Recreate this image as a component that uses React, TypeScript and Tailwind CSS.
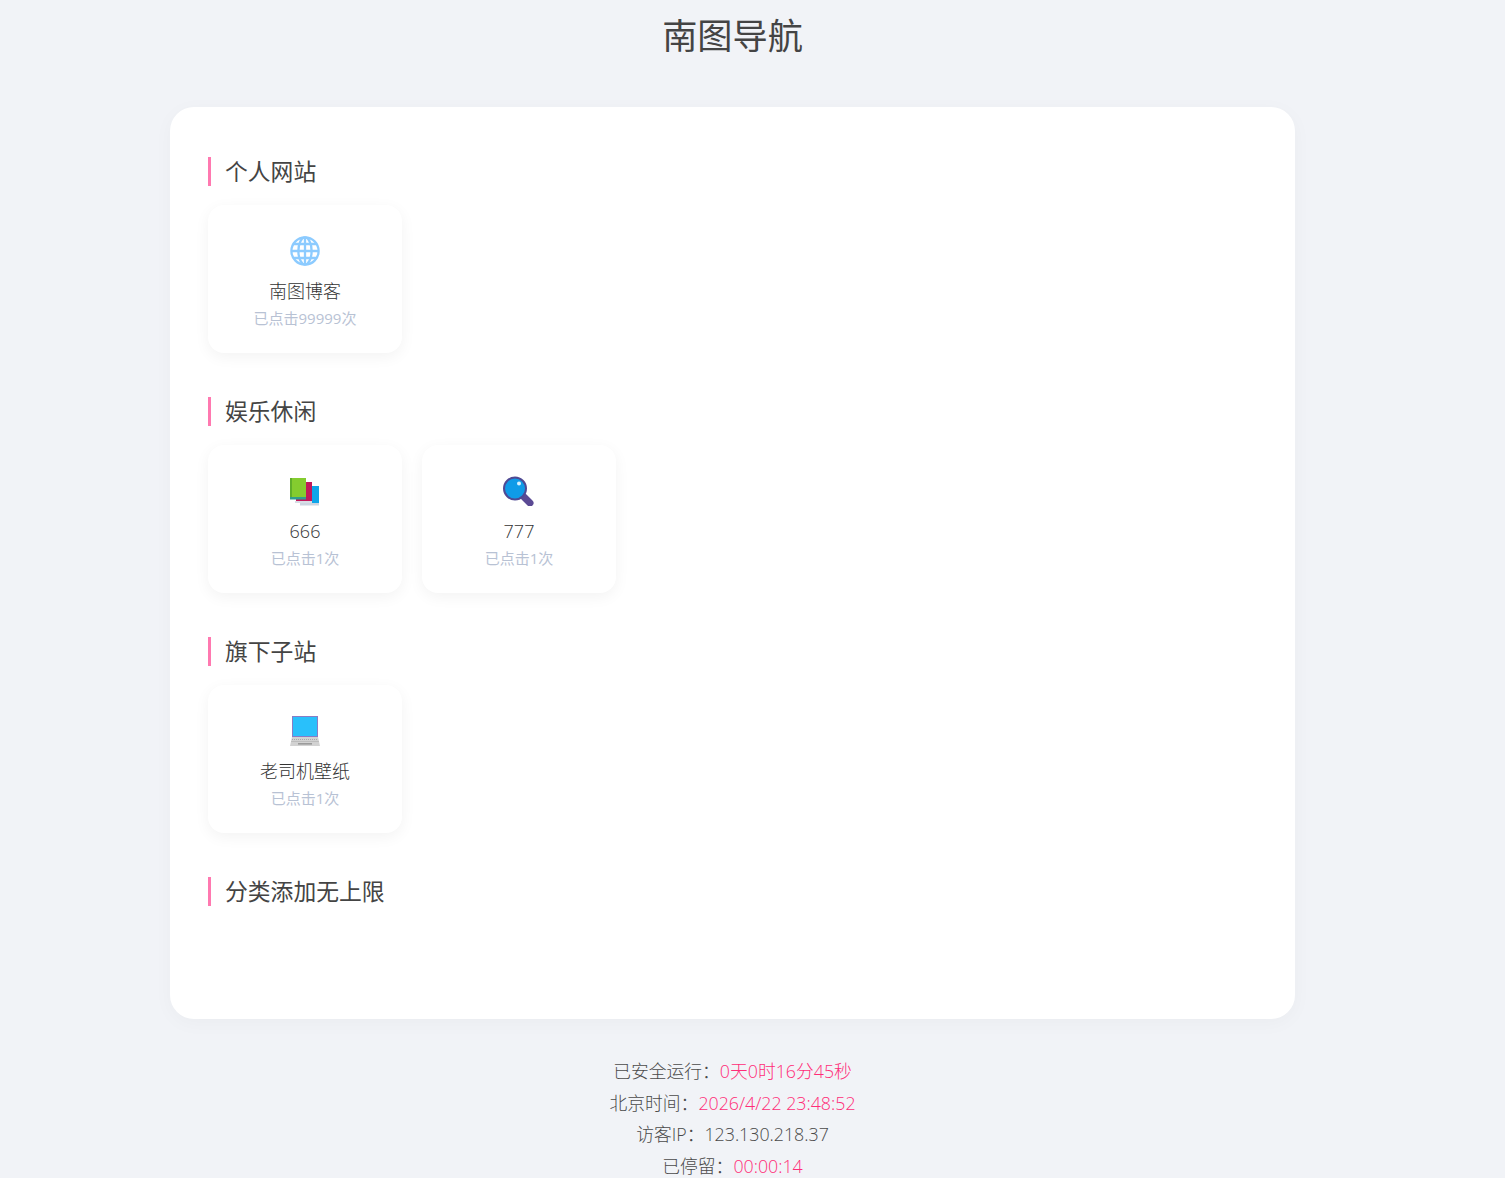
import React from "react";

const Globe = () => (
  <svg width="30" height="30" viewBox="0 0 30 30" fill="none" stroke="#8ccbff" strokeWidth="2.3">
    <circle cx="15" cy="15" r="13.6" />
    <ellipse cx="15" cy="15" rx="6.6" ry="13.6" />
    <path d="M15 1.4V28.6M1.4 15H28.6M3.6 8H26.4M3.6 22H26.4" />
  </svg>
);

const Books = () => (
  <svg width="32" height="30" viewBox="0 0 32 30">
    <rect x="14" y="10" width="16" height="19" fill="#0ea5e9" />
    <rect x="11" y="27" width="19" height="2.5" fill="#cbd5e1" />
    <rect x="7" y="6" width="16" height="20" fill="#c2185b" />
    <rect x="6" y="25" width="17" height="2" fill="#d7dde5" />
    <rect x="1" y="2" width="16" height="19" fill="#84cc2f" />
    <rect x="1" y="2" width="2" height="19" fill="#5fae2a" />
    <rect x="1" y="21" width="16" height="2.5" fill="#2f9e8f" />
  </svg>
);

const Magnifier = () => (
  <svg width="32" height="30" viewBox="0 0 32 30">
    <path d="M21 21L27 27" stroke="#5b4a94" strokeWidth="7" strokeLinecap="round" />
    <circle cx="12" cy="12.5" r="11" fill="#0f9be8" stroke="#4f4a94" strokeWidth="2" />
    <circle cx="16" cy="7.5" r="2" fill="#d6f1ff" />
  </svg>
);

const Laptop = () => (
  <svg width="32" height="30" viewBox="0 0 32 30">
    <rect x="3" y="0" width="26" height="21" fill="#8a7cc4" />
    <rect x="4" y="1" width="24" height="19" fill="#29c0fb" />
    <path d="M3 21H29L31 30H1Z" fill="#d2d2d2" />
    <path d="M3 23.5H29M2.5 25.5H29.5" stroke="#a8a8a8" strokeWidth="1" strokeDasharray="1 1" />
    <rect x="9" y="27" width="14" height="1.6" fill="#9b9b9b" />
  </svg>
);

function Card({ icon, name, clicks }: { icon: React.ReactNode; name: string; clicks: string }) {
  return (
    <div className="flex h-[148px] w-[194px] flex-col items-center rounded-2xl bg-white pt-[31px] shadow-[0_4px_15px_rgba(0,0,0,0.05)]">
      <div className="flex h-[30px] items-center justify-center">{icon}</div>
      <div className="mt-[10px] text-[18px] leading-[30px] text-[#333]">{name}</div>
      <div className="text-[15px] leading-[24px] font-normal text-[#b8c2d4]">{clicks}</div>
    </div>
  );
}

function Section({ title, children }: { title: string; children?: React.ReactNode }) {
  return (
    <section className="mb-[44px]">
      <h2 className="border-l-[3px] border-[#ff79b0] pl-[14px] pt-[1px] text-[22.8px] leading-[28px] font-normal text-[#444]">
        {title}
      </h2>
      {children && <div className="mt-[19px] flex gap-5">{children}</div>}
    </section>
  );
}

export default function App() {
  return (
    <div
      className="h-[1178px] overflow-hidden bg-[#f1f3f7]"
      style={{ fontFamily: '"Open Sans", "Noto Sans CJK SC", sans-serif', fontWeight: 300 }}
    >
      <div className="w-[1465px]">
        <h1 className="pt-[11px] pb-[1px] text-center text-[35.2px] leading-[48px] font-normal text-[#444]">南图导航</h1>
        <main className="mx-auto mt-[47px] h-[912px] w-[1125px] rounded-[24px] bg-white px-[38px] pt-[50px] shadow-[0_4px_20px_rgba(0,0,0,0.03)]">
          <Section title="个人网站">
            <Card icon={<Globe />} name="南图博客" clicks="已点击99999次" />
          </Section>
          <Section title="娱乐休闲">
            <Card icon={<Books />} name="666" clicks="已点击1次" />
            <Card icon={<Magnifier />} name="777" clicks="已点击1次" />
          </Section>
          <Section title="旗下子站">
            <Card icon={<Laptop />} name="老司机壁纸" clicks="已点击1次" />
          </Section>
          <Section title="分类添加无上限" />
        </main>
        <footer className="mt-[37px] text-center text-[17.8px] leading-[31.6px] text-[#4a4a4a]">
          <p>已安全运行：<span className="text-[#ff2d78]">0天0时16分45秒</span></p>
          <p>北京时间：<span className="text-[#ff2d78]">2026/4/22 23:48:52</span></p>
          <p>访客IP：123.130.218.37</p>
          <p>已停留：<span className="text-[#ff2d78]">00:00:14</span></p>
        </footer>
      </div>
    </div>
  );
}
